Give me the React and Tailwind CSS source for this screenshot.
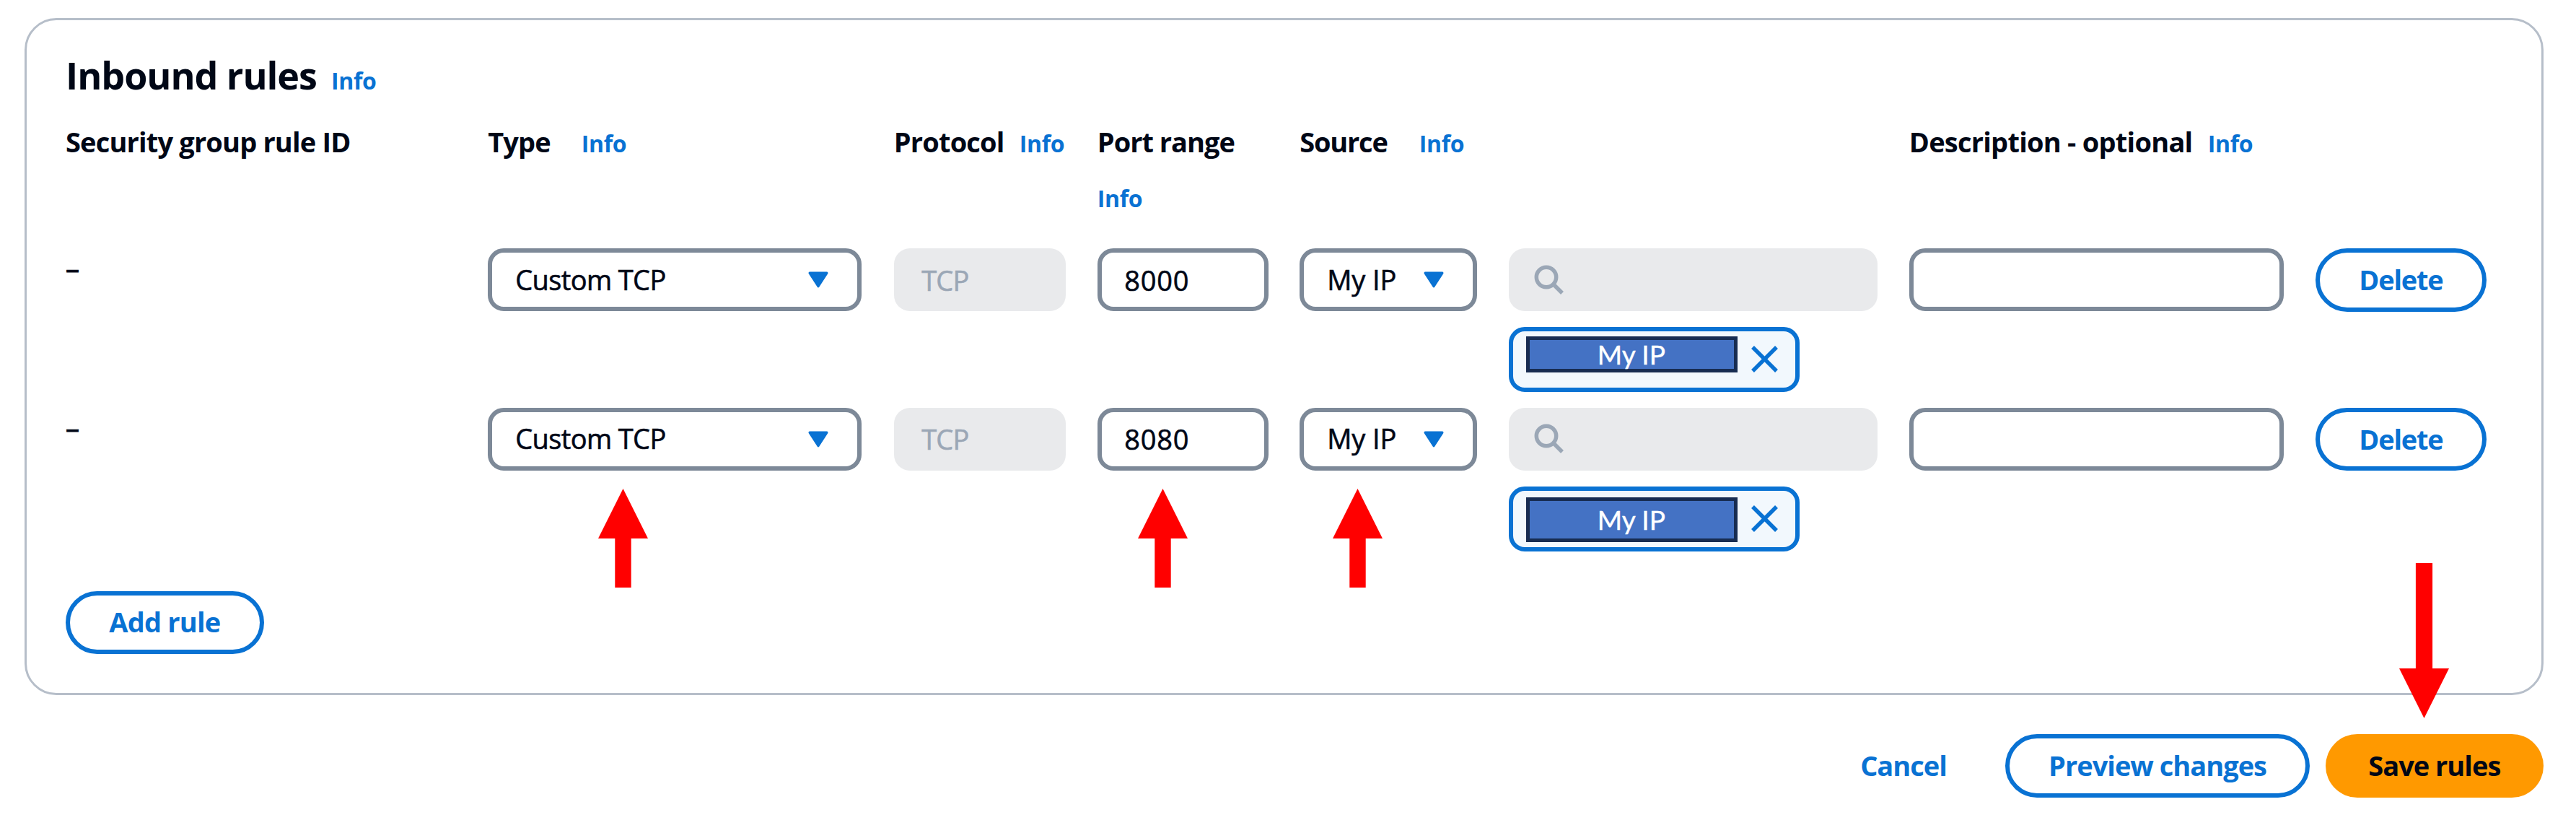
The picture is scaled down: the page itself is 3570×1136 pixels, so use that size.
const GRID =
  "grid grid-cols-[585.2px_562.5px_282.1px_280.4px_289.4px_555.2px_562.9px_238px]";

function Info() {
  return (
    <a className="text-[32px] leading-[55px] font-bold tracking-[-0.33px] text-[#0972d3]">Info</a>
  );
}

function Label({ children, className = "" }) {
  return (
    <span className={`shrink-0 whitespace-nowrap text-[38px] leading-[55px] font-bold ${className}`}>
      {children}
    </span>
  );
}

function Caret() {
  return (
    <svg width="28" height="23" viewBox="0 0 28 23" className="shrink-0" fill="#0972d3">
      <path d="M2.2 0.5H25.8C27.3 0.5 28 2 27.2 3.2L15.2 21.7C14.6 22.7 13.4 22.7 12.8 21.7L0.8 3.2C0 2 0.7 0.5 2.2 0.5Z" />
    </svg>
  );
}

function Select({ value, className = "", textClass = "" }) {
  return (
    <div
      className={`flex h-[87.2px] items-center justify-between rounded-[22px] border-6 border-[#7d8998] bg-white pr-[40px] pl-[32px] ${className}`}
    >
      <span className={`-mt-px whitespace-nowrap ${textClass}`}>{value}</span>
      <Caret />
    </div>
  );
}

function SearchBox() {
  return (
    <div className="flex h-[87.2px] w-[511.5px] items-center rounded-[22px] bg-[#e9eaec] pl-[35px]">
      <svg width="42" height="42" viewBox="0 0 42 42" fill="none" stroke="#9ba7b6" strokeWidth="5.5">
        <circle cx="17" cy="17" r="13.7" />
        <path d="M26.5 26.5L39 39" />
      </svg>
    </div>
  );
}

function Token({ maskClass }) {
  return (
    <div className="mt-[22.2px] flex h-[89.7px] w-[403.4px] items-start rounded-[22px] border-6 border-[#0972d3] bg-[#f2f8fd] pl-[18.5px]">
      <div
        className={`flex w-[292.5px] shrink-0 justify-center border-5 border-[#172c51] bg-[#4472c4] font-[Lato,sans-serif] text-[37px] font-normal text-white ${maskClass}`}
      >
        <span className="-ml-px whitespace-nowrap [-webkit-text-stroke:0.4px_white]">My IP</span>
      </div>
      <svg width="37" height="37" viewBox="0 0 37 37" className="mt-[20px] ml-[19px] shrink-0" fill="none" stroke="#0972d3" strokeWidth="5.5">
        <path d="M2 2L35 35M35 2L2 35" />
      </svg>
    </div>
  );
}

function Button({ children, className }) {
  return (
    <button
      className={`flex h-[87.5px] shrink-0 items-center justify-center rounded-full text-[38px] font-bold whitespace-nowrap ${className}`}
    >
      {children}
    </button>
  );
}

const OUTLINE = "border-6 border-[#0972d3] bg-white text-[#0972d3]";
const FIELD_TEXT = "[-webkit-text-stroke:0.6px_currentColor]";

function Rule({ port, maskClass }) {
  return (
    <div className={`${GRID} h-[220.8px] items-start text-[38px]`}>
      <div className="leading-[55px] [-webkit-text-stroke:1px_currentColor]">–</div>
      <Select value="Custom TCP" className="w-[518.3px]" textClass={`tracking-[-0.6px] ${FIELD_TEXT}`} />
      <div className={`flex h-[87.2px] w-[238.3px] items-center rounded-[22px] bg-[#e9eaec] pt-px pl-[38.5px] tracking-[-0.8px] text-[#9ba7b6] ${FIELD_TEXT}`}>
        TCP
      </div>
      <div className={`flex h-[87.2px] w-[236.8px] items-center rounded-[22px] border-6 border-[#7d8998] pt-px pl-[31.5px] tracking-[0.8px] ${FIELD_TEXT}`}>
        {port}
      </div>
      <Select value="My IP" className="w-[245.8px]" textClass={`tracking-[-0.1px] ${FIELD_TEXT}`} />
      <div>
        <SearchBox />
        <Token maskClass={maskClass} />
      </div>
      <div className="h-[87.2px] w-[519.6px] rounded-[22px] border-6 border-[#7d8998]" />
      <Button className={`w-[237.6px] pb-px tracking-[-1.2px] ${OUTLINE}`}>Delete</Button>
    </div>
  );
}

function UpArrow({ className }) {
  return (
    <svg width="69" height="137" viewBox="0 0 69 137" className={`absolute top-[676.5px] ${className}`} fill="#ff0000">
      <path d="M34.5 0L69 69H45.7V137H23.3V69H0Z" />
    </svg>
  );
}

export default function App() {
  return (
    <div className="relative h-[1136px] w-[3570px] overflow-hidden bg-white pt-[25px] pl-[34px] font-['Open_Sans',sans-serif] text-[#000716]">
      <section className="h-[938px] w-[3491px] rounded-[44px] border-3 border-[#b6bec9] pt-[42px] pl-[54px]">
        <div className="flex items-baseline">
          <h2 className="w-[368px] text-[52px] leading-[68px] font-bold tracking-[-1.05px] whitespace-nowrap">
            Inbound rules
          </h2>
          <Info />
        </div>
        <div className={`${GRID} mt-[30px] h-[175px] items-start`}>
          <Label className="tracking-[-0.83px]">Security group rule ID</Label>
          <div className="flex items-baseline">
            <Label className="w-[129.5px] tracking-[-0.9px]">Type</Label>
            <Info />
          </div>
          <div className="flex items-baseline">
            <Label className="w-[174px] tracking-[-0.8px]">Protocol</Label>
            <Info />
          </div>
          <div className="flex w-[236.8px] flex-wrap items-baseline gap-x-[22px] gap-y-[23px]">
            <Label className="tracking-[-1px]">Port range</Label>
            <Info />
          </div>
          <div className="flex items-baseline">
            <Label className="w-[165.5px] tracking-[-1.2px]">Source</Label>
            <Info />
          </div>
          <div />
          <div className="flex items-baseline">
            <Label className="w-[414px] tracking-[-0.75px]">Description - optional</Label>
            <Info />
          </div>
        </div>
        <Rule port="8000" maskClass="mt-[7px] h-[50px] leading-[40px]" />
        <Rule port="8080" maskClass="mt-[9px] h-[62px] leading-[52px]" />
        <Button className={`mt-[33px] w-[274.7px] pb-px tracking-[-0.8px] ${OUTLINE}`}>Add rule</Button>
      </section>

      <div className="mt-[54px] flex w-[3491px] justify-end gap-[21.8px]">
        <Button className="w-[239px] tracking-[-1px] text-[#0972d3]">Cancel</Button>
        <Button className={`w-[421.5px] tracking-[-1px] ${OUTLINE}`}>Preview changes</Button>
        <Button className="w-[302.4px] bg-[#ff9900] tracking-[-1px] text-[#000716]">Save rules</Button>
      </div>

      <UpArrow className="left-[829px]" />
      <UpArrow className="left-[1577px]" />
      <UpArrow className="left-[1847px]" />
      <svg width="69" height="215" viewBox="0 0 69 215" className="absolute top-[780px] left-[3325px]" fill="#ff0000">
        <path d="M22.9 0H46.1V146H69L34.5 215L0 146H22.9Z" />
      </svg>
    </div>
  );
}
